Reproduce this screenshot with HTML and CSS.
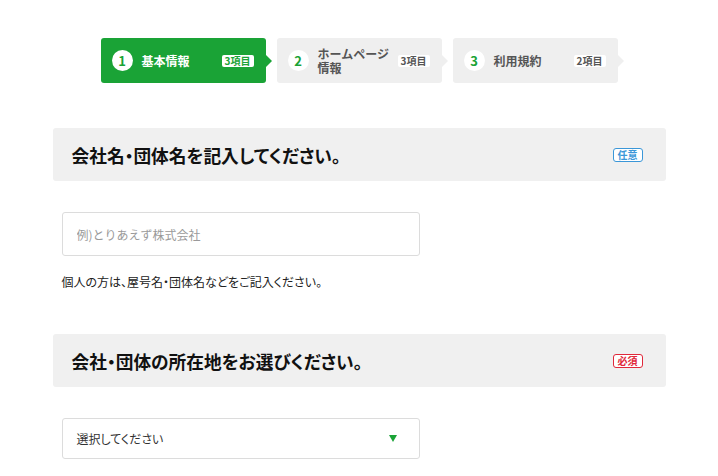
FILE: index.html
```html
<!DOCTYPE html>
<html lang="ja">
<head>
<meta charset="utf-8">
<title>フォーム</title>
<link rel="stylesheet" href="styles.css">
</head>
<body>
<div class="page">
  <ol class="steps">
    <li class="step step-active">
      <span class="step-num">1</span>
      <span class="step-label">基本情報</span>
      <span class="step-count">3項目</span>
    </li>
    <li class="step">
      <span class="step-num">2</span>
      <span class="step-label"><span class="line">ホームページ</span><span class="line">情報</span></span>
      <span class="step-count">3項目</span>
    </li>
    <li class="step">
      <span class="step-num">3</span>
      <span class="step-label">利用規約</span>
      <span class="step-count">2項目</span>
    </li>
  </ol>

  <section class="field">
    <div class="field-head">
      <h2 class="field-title">会社名・団体名を記入してください。</h2>
      <span class="tag tag-optional">任意</span>
    </div>
    <div class="field-body">
      <input class="text-input" type="text" placeholder="例)とりあえず株式会社">
      <p class="help">個人の方は、屋号名・団体名などをご記入ください。</p>
    </div>
  </section>

  <section class="field field-second">
    <div class="field-head">
      <h2 class="field-title">会社・団体の所在地をお選びください。</h2>
      <span class="tag tag-required">必須</span>
    </div>
    <div class="field-body">
      <div class="select">
        <span class="select-text">選択してください</span>
        <span class="select-arrow"></span>
      </div>
    </div>
  </section>
</div>
</body>
</html>
```

FILE: styles.css
```css
* { box-sizing: border-box; }

html, body {
  margin: 0;
  padding: 0;
  background: #ffffff;
}

body {
  font-family: "Noto Sans CJK JP", "Noto Sans", sans-serif;
  color: #222222;
  font-feature-settings: "palt";
}

.page {
  width: 613px;
  margin: 0 auto;
  padding-top: 38px;
}

.steps {
  list-style: none;
  margin: 0;
  padding: 0;
  display: flex;
  justify-content: center;
  gap: 11px;
}

.step {
  position: relative;
  width: 165px;
  height: 45px;
  background: #efefef;
  border-radius: 3px;
  display: flex;
  align-items: center;
  padding: 0 12px 0 11px;
  color: #555555;
}

.step::after {
  content: "";
  position: absolute;
  right: -6px;
  top: 17px;
  border-left: 6px solid #efefef;
  border-top: 6px solid transparent;
  border-bottom: 6px solid transparent;
}

.step-active {
  background: #1aa336;
  color: #ffffff;
}

.step-active::after {
  border-left-color: #1aa336;
}

.step-num {
  width: 21px;
  height: 21px;
  border-radius: 50%;
  background: #ffffff;
  color: #1aa336;
  font-size: 13px;
  font-weight: 700;
  display: flex;
  align-items: center;
  justify-content: center;
  flex-shrink: 0;
  margin-right: 9px;
}

.step-label {
  flex: 1;
  display: flex;
  flex-direction: column;
  font-size: 12px;
  font-weight: 700;
  line-height: 14px;
  font-feature-settings: normal;
}

.line {
  display: block;
}

.step-count {
  background: #ffffff;
  color: #555555;
  font-size: 10px;
  font-weight: 700;
  line-height: 12px;
  height: 12px;
  padding: 0 3px;
  border-radius: 2px;
}

.step-active .step-count {
  color: #1aa336;
}

.field {
  margin-top: 45px;
}

.field-second {
  margin-top: 44px;
}

.field-head {
  height: 53px;
  background: #f0f0f0;
  border-radius: 3px;
  display: flex;
  align-items: center;
  justify-content: space-between;
  padding: 0 23px 0 19px;
}

.field-title {
  margin: 0;
  font-size: 17.7px;
  font-weight: 700;
  color: #111111;
}

.tag {
  font-size: 10px;
  font-weight: 700;
  line-height: 11px;
  padding: 0 4px;
  border: 1.5px solid;
  border-radius: 3px;
  background: #ffffff;
  height: 14px;
}

.tag-optional {
  color: #3b97d8;
  border-color: #3b97d8;
}

.tag-required {
  color: #e0283a;
  border-color: #e0283a;
}

.field-body {
  padding: 31px 0 0 9px;
}

.text-input {
  display: block;
  width: 358px;
  height: 44px;
  margin: 0;
  border: 1px solid #dcdcdc;
  border-radius: 3px;
  padding: 0 14px;
  font-family: "Noto Sans CJK JP", "Noto Sans", sans-serif;
  font-size: 12px;
  color: #333333;
  background: #ffffff;
  outline: none;
}

.text-input::placeholder {
  color: #9a9a9a;
}

.help {
  margin: 18px 0 0 0;
  font-size: 12px;
  line-height: 16px;
  color: #222222;
}

.select {
  width: 358px;
  height: 41px;
  border: 1px solid #dcdcdc;
  border-radius: 3px;
  display: flex;
  align-items: center;
  justify-content: space-between;
  padding: 0 22px 0 14px;
  background: #ffffff;
}

.select-text {
  font-size: 12px;
  color: #333333;
}

.select-arrow {
  width: 0;
  height: 0;
  border-top: 7px solid #1aa336;
  border-left: 4.5px solid transparent;
  border-right: 4.5px solid transparent;
}
```
